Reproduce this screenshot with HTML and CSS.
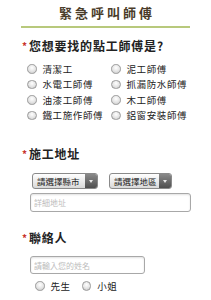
FILE: index.html
```html
<!DOCTYPE html>
<html lang="zh-Hant">
<head>
<meta charset="utf-8">
<link rel="stylesheet" href="styles.css">
</head>
<body>
<div class="page">
  <h1 class="title">緊急呼叫師傅</h1>

  <h2 class="heading"><span class="req">*</span>您想要找的點工師傅是?</h2>
  <div class="options">
    <label class="opt"><input type="radio" name="w" class="radio"><span>清潔工</span></label>
    <label class="opt"><input type="radio" name="w" class="radio"><span>泥工師傅</span></label>
    <label class="opt"><input type="radio" name="w" class="radio"><span>水電工師傅</span></label>
    <label class="opt"><input type="radio" name="w" class="radio"><span>抓漏防水師傅</span></label>
    <label class="opt"><input type="radio" name="w" class="radio"><span>油漆工師傅</span></label>
    <label class="opt"><input type="radio" name="w" class="radio"><span>木工師傅</span></label>
    <label class="opt"><input type="radio" name="w" class="radio"><span>鐵工施作師傅</span></label>
    <label class="opt"><input type="radio" name="w" class="radio"><span>鋁窗安裝師傅</span></label>
  </div>

  <h2 class="heading h-addr"><span class="req">*</span>施工地址</h2>
  <div class="addr">
    <div class="selects">
      <div class="sel sel-city"><span class="sel-text">請選擇縣市</span><span class="sel-btn"><span class="arrow"></span></span></div>
      <div class="sel sel-area"><span class="sel-text">請選擇地區</span><span class="sel-btn"><span class="arrow"></span></span></div>
    </div>
    <input type="text" class="field field-addr" placeholder="詳細地址">
  </div>

  <h2 class="heading h-contact"><span class="req">*</span>聯絡人</h2>
  <div class="contact">
    <input type="text" class="field field-name" placeholder="請輸入您的姓名">
    <div class="gender">
      <label class="opt"><input type="radio" name="g" class="radio"><span>先生</span></label>
      <label class="opt"><input type="radio" name="g" class="radio"><span>小姐</span></label>
    </div>
  </div>
</div>
</body>
</html>
```

FILE: styles.css
```css
* { box-sizing: border-box; }
html, body { margin: 0; padding: 0; background: #fff; }
body {
  width: 211px;
  font-family: "Noto Sans CJK TC", "Noto Sans", sans-serif;
  color: #333;
}
.page { padding: 0 21px; }

.title {
  margin: 0;
  height: 28px;
  line-height: 26px;
  text-align: center;
  font-size: 13px;
  font-weight: bold;
  letter-spacing: 3px;
  padding-left: 3px;
  color: #4a3c2a;
  border-bottom: 2px solid #b8c97c;
}

.heading {
  margin: 10px 0 0;
  height: 16px;
  line-height: 16px;
  font-size: 12px;
  font-weight: bold;
  letter-spacing: 0.8px;
  color: #222;
  white-space: nowrap;
}
.req {
  color: #c8322c;
  font-size: 10px;
  margin-left: 1px;
  margin-right: 1px;
  vertical-align: 1px;
}
.h-addr { margin-top: 23px; }
.h-contact { margin-top: 18px; }

.options {
  margin-top: 7px;
  padding-left: 6px;
  display: grid;
  grid-template-columns: 84px 1fr;
  grid-auto-rows: 15.5px;
}
.opt {
  display: flex;
  align-items: center;
  gap: 6px;
  font-size: 9.5px;
  letter-spacing: 0.6px;
  color: #222;
  white-space: nowrap;
}
.radio {
  appearance: none;
  -webkit-appearance: none;
  margin: 0;
  width: 9.5px;
  height: 9.5px;
  border-radius: 50%;
  border: 1px solid #9a9a9a;
  background: radial-gradient(circle at 50% 35%, #ffffff 0%, #e4e4e4 55%, #c0c0c0 100%);
  flex: none;
}

.addr { margin-top: 11px; padding-left: 9px; }
.selects { display: flex; gap: 11px; margin-left: 2px; }
.sel {
  display: flex;
  height: 16px;
  border: 1px solid #8a8a8a;
  border-radius: 3px;
  background: linear-gradient(#ffffff, #d9d9d9);
  overflow: hidden;
}
.sel-city { width: 66px; }
.sel-area { width: 63px; }
.sel-text {
  flex: 1;
  font-size: 8.5px;
  line-height: 14px;
  padding-left: 4px;
  color: #222;
  white-space: nowrap;
}
.sel-btn {
  width: 12px;
  flex: none;
  background: linear-gradient(#8a8a8a, #4f4f4f);
  display: flex;
  align-items: center;
  justify-content: center;
}
.arrow {
  width: 0; height: 0;
  border-left: 2px solid transparent;
  border-right: 2px solid transparent;
  border-top: 3px solid #e8e8e8;
}

.field {
  display: block;
  margin: 0;
  height: 19px;
  border: 1px solid #a8a8a8;
  border-radius: 3px;
  box-shadow: inset 0 1px 2px rgba(0,0,0,0.12);
  font-family: inherit;
  font-size: 8px;
  padding: 0 3px;
  color: #333;
  background: #fff;
  outline: none;
}
.field::placeholder { color: #bdbdbd; }
.field-addr { margin-top: 4px; width: 161px; }

.contact { margin-top: 10px; padding-left: 9px; }
.field-name { width: 115px; height: 18px; }
.gender {
  display: flex;
  gap: 11px;
  margin-top: 4px;
  padding-left: 5px;
  height: 15.5px;
}
```
